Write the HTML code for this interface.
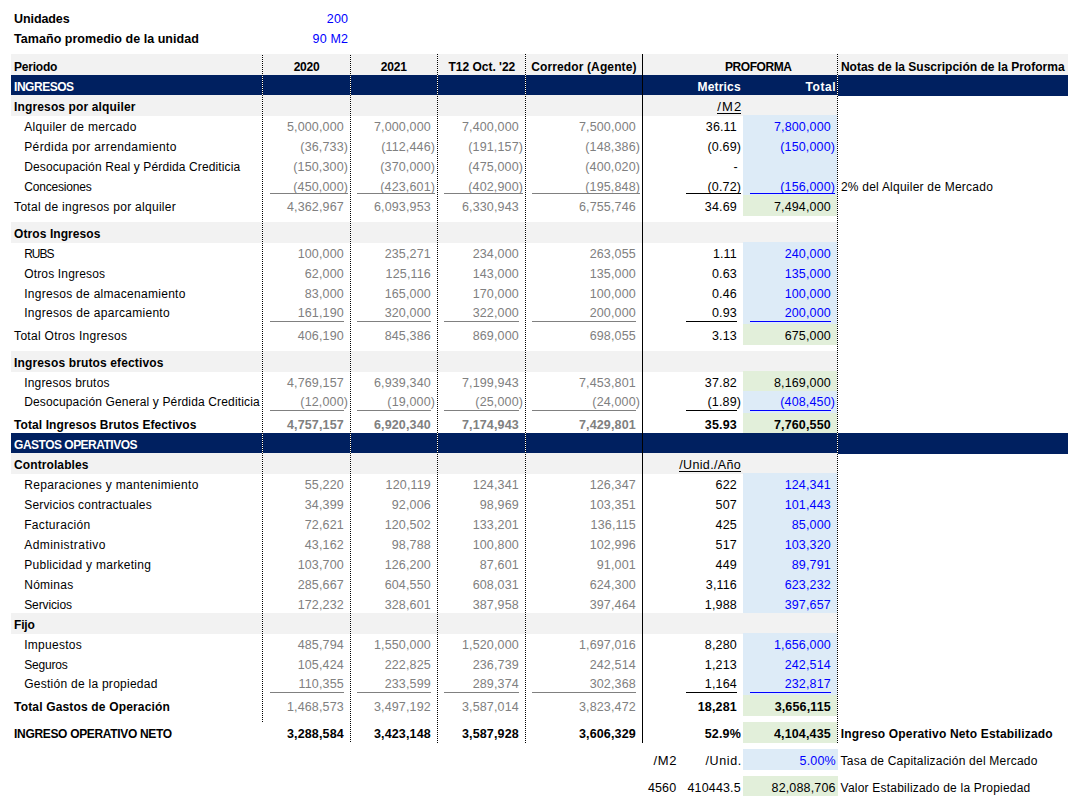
<!DOCTYPE html>
<html lang="es"><head><meta charset="utf-8"><title>Proforma</title><style>
html,body{margin:0;padding:0;background:#fff}
body{width:1068px;height:796px;position:relative;overflow:hidden;font-family:"Liberation Sans",sans-serif;font-size:12.0px;color:#000}
.r{position:absolute}
.t{position:absolute;white-space:nowrap;line-height:20px}
.b{font-weight:bold}
.u{text-decoration:underline;text-underline-offset:1.5px;text-decoration-thickness:1px}
.dv{position:absolute;width:1px;background:repeating-linear-gradient(to bottom,#000 0,#000 1px,#fff 1px,#fff 2px)}
</style></head><body>
<div class="r" style="left:11px;top:54px;width:1057px;height:21px;background:#f2f2f2"></div>
<div class="r" style="left:11px;top:75px;width:1057px;height:21px;background:#002060"></div>
<div class="r" style="left:11px;top:95px;width:827px;height:21px;background:#f2f2f2"></div>
<div class="r" style="left:11px;top:222px;width:827px;height:21px;background:#f2f2f2"></div>
<div class="r" style="left:11px;top:351px;width:827px;height:21px;background:#f2f2f2"></div>
<div class="r" style="left:743px;top:115px;width:95px;height:80px;background:#ddebf7"></div>
<div class="r" style="left:743px;top:195px;width:95px;height:21px;background:#e2efda"></div>
<div class="r" style="left:743px;top:242px;width:95px;height:82px;background:#ddebf7"></div>
<div class="r" style="left:743px;top:324px;width:95px;height:21px;background:#e2efda"></div>
<div class="r" style="left:743px;top:371px;width:95px;height:20px;background:#e2efda"></div>
<div class="r" style="left:743px;top:391px;width:95px;height:22px;background:#ddebf7"></div>
<div class="r" style="left:743px;top:413px;width:95px;height:20px;background:#e2efda"></div>
<div class="r" style="left:11px;top:433px;width:1057px;height:21px;background:#002060"></div>
<div class="r" style="left:11px;top:453px;width:827px;height:21px;background:#f2f2f2"></div>
<div class="r" style="left:11px;top:613px;width:827px;height:21px;background:#f2f2f2"></div>
<div class="r" style="left:743px;top:473px;width:95px;height:140px;background:#ddebf7"></div>
<div class="r" style="left:743px;top:613px;width:95px;height:20px;background:#f2f2f2"></div>
<div class="r" style="left:743px;top:633px;width:95px;height:62px;background:#ddebf7"></div>
<div class="r" style="left:743px;top:695px;width:95px;height:21px;background:#e2efda"></div>
<div class="r" style="left:743px;top:722px;width:95px;height:21px;background:#e2efda"></div>
<div class="r" style="left:743px;top:749px;width:95px;height:21px;background:#ddebf7"></div>
<div class="r" style="left:743px;top:776px;width:95px;height:21px;background:#e2efda"></div>
<div class="dv" style="left:262px;top:55px;height:667px"></div>
<div class="dv" style="left:350px;top:55px;height:688px"></div>
<div class="dv" style="left:437px;top:54px;height:689px"></div>
<div class="dv" style="left:525px;top:54px;height:689px"></div>
<div class="dv" style="left:837px;top:54px;height:689px"></div>
<div class="r" style="left:642px;top:54px;width:1px;height:689px;background:#000"></div>
<div class="r" style="left:717px;top:113px;width:24px;height:1px;background:#000"></div>
<div class="r" style="left:679px;top:471px;width:62px;height:1px;background:#000"></div>
<div class="r" style="left:270px;top:193px;width:78px;height:1px;background:#808080"></div>
<div class="r" style="left:357px;top:193px;width:78px;height:1px;background:#808080"></div>
<div class="r" style="left:444px;top:193px;width:79px;height:1px;background:#808080"></div>
<div class="r" style="left:532px;top:193px;width:108px;height:1px;background:#808080"></div>
<div class="r" style="left:686px;top:193px;width:55px;height:1px;background:#000"></div>
<div class="r" style="left:750px;top:193px;width:85px;height:1px;background:#0000ff"></div>
<div class="r" style="left:270px;top:321px;width:74px;height:1px;background:#808080"></div>
<div class="r" style="left:357px;top:321px;width:74px;height:1px;background:#808080"></div>
<div class="r" style="left:444px;top:321px;width:75px;height:1px;background:#808080"></div>
<div class="r" style="left:532px;top:321px;width:104px;height:1px;background:#808080"></div>
<div class="r" style="left:686px;top:321px;width:51px;height:1px;background:#000"></div>
<div class="r" style="left:750px;top:321px;width:81px;height:1px;background:#0000ff"></div>
<div class="r" style="left:270px;top:410px;width:74px;height:1px;background:#808080"></div>
<div class="r" style="left:357px;top:410px;width:74px;height:1px;background:#808080"></div>
<div class="r" style="left:444px;top:410px;width:75px;height:1px;background:#808080"></div>
<div class="r" style="left:532px;top:410px;width:104px;height:1px;background:#808080"></div>
<div class="r" style="left:686px;top:410px;width:51px;height:1px;background:#000"></div>
<div class="r" style="left:750px;top:410px;width:81px;height:1px;background:#0000ff"></div>
<div class="r" style="left:270px;top:692px;width:74px;height:1px;background:#808080"></div>
<div class="r" style="left:357px;top:692px;width:74px;height:1px;background:#808080"></div>
<div class="r" style="left:444px;top:692px;width:75px;height:1px;background:#808080"></div>
<div class="r" style="left:532px;top:692px;width:104px;height:1px;background:#808080"></div>
<div class="r" style="left:686px;top:692px;width:51px;height:1px;background:#000"></div>
<div class="r" style="left:750px;top:692px;width:81px;height:1px;background:#0000ff"></div>
<span class="t b" style="left:14.10px;top:9px;font-size:12.5px;letter-spacing:-0.101px">Unidades</span>
<span class="t" style="left:326.80px;top:9px;font-size:12.5px;color:#0000ff;letter-spacing:0.150px">200</span>
<span class="t b" style="left:14.10px;top:29px;font-size:12.5px;letter-spacing:0.034px">Tamaño promedio de la unidad</span>
<span class="t" style="left:312.61px;top:29px;font-size:12.5px;color:#0000ff;letter-spacing:0.150px">90 M2</span>
<span class="t b" style="left:14.10px;top:57px;letter-spacing:-0.240px">Periodo</span>
<span class="t b" style="left:293.70px;top:57px;letter-spacing:-0.274px">2020</span>
<span class="t b" style="left:380.80px;top:57px;letter-spacing:-0.207px">2021</span>
<span class="t b" style="left:448.40px;top:57px">T12 Oct. '22</span>
<span class="t b" style="left:531.20px;top:57px;letter-spacing:0.123px">Corredor (Agente)</span>
<span class="t b" style="left:725.00px;top:57px;letter-spacing:-0.433px">PROFORMA</span>
<span class="t b" style="left:840.90px;top:57px;letter-spacing:0.008px">Notas de la Suscripción de la Proforma</span>
<span class="t b" style="left:14.10px;top:77px;color:#fff;letter-spacing:-0.492px">INGRESOS</span>
<span class="t b" style="left:697.60px;top:77px;color:#fff;letter-spacing:0.159px">Metrics</span>
<span class="t b" style="left:805.60px;top:77px;color:#fff;letter-spacing:0.565px">Total</span>
<span class="t b" style="left:14.10px;top:435px;color:#fff;letter-spacing:-0.511px">GASTOS OPERATIVOS</span>
<span class="t b" style="left:14.10px;top:97px;letter-spacing:0.131px">Ingresos por alquiler</span>
<span class="t" style="left:717.30px;top:97px;font-size:13px;letter-spacing:1.130px">/M2</span>
<span class="t b" style="left:14.10px;top:224px;letter-spacing:0.075px">Otros Ingresos</span>
<span class="t b" style="left:14.10px;top:353px;letter-spacing:0.137px">Ingresos brutos efectivos</span>
<span class="t b" style="left:14.10px;top:455px;letter-spacing:0.089px">Controlables</span>
<span class="t" style="left:679.20px;top:455px;font-size:12.5px;letter-spacing:0.354px">/Unid./Año</span>
<span class="t b" style="left:14.10px;top:615px;letter-spacing:-0.199px">Fijo</span>
<span class="t" style="left:24.20px;top:117px;letter-spacing:0.306px">Alquiler de mercado</span>
<span class="t" style="left:286.94px;top:117px;font-size:12.5px;color:#808080;letter-spacing:0.150px">5,000,000</span>
<span class="t" style="left:373.94px;top:117px;font-size:12.5px;color:#808080;letter-spacing:0.150px">7,000,000</span>
<span class="t" style="left:461.94px;top:117px;font-size:12.5px;color:#808080;letter-spacing:0.150px">7,400,000</span>
<span class="t" style="left:578.94px;top:117px;font-size:12.5px;color:#808080;letter-spacing:0.150px">7,500,000</span>
<span class="t" style="left:705.80px;top:117px;font-size:12.5px;letter-spacing:0.150px">36.11</span>
<span class="t" style="left:773.94px;top:117px;font-size:12.5px;color:#0000ff;letter-spacing:0.150px">7,800,000</span>
<span class="t" style="left:24.20px;top:137px;letter-spacing:0.395px">Pérdida por arrendamiento</span>
<span class="t" style="left:300.35px;top:137px;font-size:12.5px;color:#808080;letter-spacing:0.150px">(36,733)</span>
<span class="t" style="left:381.18px;top:137px;font-size:12.5px;color:#808080;letter-spacing:0.150px">(112,446)</span>
<span class="t" style="left:468.25px;top:137px;font-size:12.5px;color:#808080;letter-spacing:0.150px">(191,157)</span>
<span class="t" style="left:585.25px;top:137px;font-size:12.5px;color:#808080;letter-spacing:0.150px">(148,386)</span>
<span class="t" style="left:707.56px;top:137px;font-size:12.5px;letter-spacing:0.150px">(0.69)</span>
<span class="t" style="left:780.25px;top:137px;font-size:12.5px;color:#0000ff;letter-spacing:0.150px">(150,000)</span>
<span class="t" style="left:24.20px;top:157px;letter-spacing:0.122px">Desocupación Real y Pérdida Crediticia</span>
<span class="t" style="left:293.25px;top:157px;font-size:12.5px;color:#808080;letter-spacing:0.150px">(150,300)</span>
<span class="t" style="left:380.25px;top:157px;font-size:12.5px;color:#808080;letter-spacing:0.150px">(370,000)</span>
<span class="t" style="left:468.25px;top:157px;font-size:12.5px;color:#808080;letter-spacing:0.150px">(475,000)</span>
<span class="t" style="left:585.25px;top:157px;font-size:12.5px;color:#808080;letter-spacing:0.150px">(400,020)</span>
<span class="t" style="left:733.40px;top:157px;font-size:12.5px">-</span>
<span class="t" style="left:24.20px;top:177px;letter-spacing:-0.183px">Concesiones</span>
<span class="t" style="left:293.25px;top:177px;font-size:12.5px;color:#808080;letter-spacing:0.150px">(450,000)</span>
<span class="t" style="left:380.25px;top:177px;font-size:12.5px;color:#808080;letter-spacing:0.150px">(423,601)</span>
<span class="t" style="left:468.25px;top:177px;font-size:12.5px;color:#808080;letter-spacing:0.150px">(402,900)</span>
<span class="t" style="left:585.25px;top:177px;font-size:12.5px;color:#808080;letter-spacing:0.150px">(195,848)</span>
<span class="t" style="left:707.56px;top:177px;font-size:12.5px;letter-spacing:0.150px">(0.72)</span>
<span class="t" style="left:780.25px;top:177px;font-size:12.5px;color:#0000ff;letter-spacing:0.150px">(156,000)</span>
<span class="t" style="left:14.10px;top:197px;letter-spacing:0.284px">Total de ingresos por alquiler</span>
<span class="t" style="left:286.94px;top:197px;font-size:12.5px;color:#808080;letter-spacing:0.150px">4,362,967</span>
<span class="t" style="left:373.94px;top:197px;font-size:12.5px;color:#808080;letter-spacing:0.150px">6,093,953</span>
<span class="t" style="left:461.94px;top:197px;font-size:12.5px;color:#808080;letter-spacing:0.150px">6,330,943</span>
<span class="t" style="left:578.94px;top:197px;font-size:12.5px;color:#808080;letter-spacing:0.150px">6,755,746</span>
<span class="t" style="left:704.87px;top:197px;font-size:12.5px;letter-spacing:0.150px">34.69</span>
<span class="t" style="left:773.94px;top:197px;font-size:12.5px;letter-spacing:0.150px">7,494,000</span>
<span class="t" style="left:24.20px;top:244px;letter-spacing:-1.012px">RUBS</span>
<span class="t" style="left:297.67px;top:244px;font-size:12.5px;color:#808080;letter-spacing:0.150px">100,000</span>
<span class="t" style="left:384.67px;top:244px;font-size:12.5px;color:#808080;letter-spacing:0.150px">235,271</span>
<span class="t" style="left:472.67px;top:244px;font-size:12.5px;color:#808080;letter-spacing:0.150px">234,000</span>
<span class="t" style="left:589.67px;top:244px;font-size:12.5px;color:#808080;letter-spacing:0.150px">263,055</span>
<span class="t" style="left:712.90px;top:244px;font-size:12.5px;letter-spacing:0.150px">1.11</span>
<span class="t" style="left:784.67px;top:244px;font-size:12.5px;color:#0000ff;letter-spacing:0.150px">240,000</span>
<span class="t" style="left:24.20px;top:264px;letter-spacing:0.162px">Otros Ingresos</span>
<span class="t" style="left:304.77px;top:264px;font-size:12.5px;color:#808080;letter-spacing:0.150px">62,000</span>
<span class="t" style="left:385.60px;top:264px;font-size:12.5px;color:#808080;letter-spacing:0.150px">125,116</span>
<span class="t" style="left:472.67px;top:264px;font-size:12.5px;color:#808080;letter-spacing:0.150px">143,000</span>
<span class="t" style="left:589.67px;top:264px;font-size:12.5px;color:#808080;letter-spacing:0.150px">135,000</span>
<span class="t" style="left:711.97px;top:264px;font-size:12.5px;letter-spacing:0.150px">0.63</span>
<span class="t" style="left:784.67px;top:264px;font-size:12.5px;color:#0000ff;letter-spacing:0.150px">135,000</span>
<span class="t" style="left:24.20px;top:284px;letter-spacing:0.285px">Ingresos de almacenamiento</span>
<span class="t" style="left:304.77px;top:284px;font-size:12.5px;color:#808080;letter-spacing:0.150px">83,000</span>
<span class="t" style="left:384.67px;top:284px;font-size:12.5px;color:#808080;letter-spacing:0.150px">165,000</span>
<span class="t" style="left:472.67px;top:284px;font-size:12.5px;color:#808080;letter-spacing:0.150px">170,000</span>
<span class="t" style="left:589.67px;top:284px;font-size:12.5px;color:#808080;letter-spacing:0.150px">100,000</span>
<span class="t" style="left:711.97px;top:284px;font-size:12.5px;letter-spacing:0.150px">0.46</span>
<span class="t" style="left:784.67px;top:284px;font-size:12.5px;color:#0000ff;letter-spacing:0.150px">100,000</span>
<span class="t" style="left:24.20px;top:303px;letter-spacing:0.292px">Ingresos de aparcamiento</span>
<span class="t" style="left:297.67px;top:303px;font-size:12.5px;color:#808080;letter-spacing:0.150px">161,190</span>
<span class="t" style="left:384.67px;top:303px;font-size:12.5px;color:#808080;letter-spacing:0.150px">320,000</span>
<span class="t" style="left:472.67px;top:303px;font-size:12.5px;color:#808080;letter-spacing:0.150px">322,000</span>
<span class="t" style="left:589.67px;top:303px;font-size:12.5px;color:#808080;letter-spacing:0.150px">200,000</span>
<span class="t" style="left:711.97px;top:303px;font-size:12.5px;letter-spacing:0.150px">0.93</span>
<span class="t" style="left:784.67px;top:303px;font-size:12.5px;color:#0000ff;letter-spacing:0.150px">200,000</span>
<span class="t" style="left:14.10px;top:326px;letter-spacing:0.291px">Total Otros Ingresos</span>
<span class="t" style="left:297.67px;top:326px;font-size:12.5px;color:#808080;letter-spacing:0.150px">406,190</span>
<span class="t" style="left:384.67px;top:326px;font-size:12.5px;color:#808080;letter-spacing:0.150px">845,386</span>
<span class="t" style="left:472.67px;top:326px;font-size:12.5px;color:#808080;letter-spacing:0.150px">869,000</span>
<span class="t" style="left:589.67px;top:326px;font-size:12.5px;color:#808080;letter-spacing:0.150px">698,055</span>
<span class="t" style="left:711.97px;top:326px;font-size:12.5px;letter-spacing:0.150px">3.13</span>
<span class="t" style="left:784.67px;top:326px;font-size:12.5px;letter-spacing:0.150px">675,000</span>
<span class="t" style="left:24.20px;top:373px;letter-spacing:0.185px">Ingresos brutos</span>
<span class="t" style="left:286.94px;top:373px;font-size:12.5px;color:#808080;letter-spacing:0.150px">4,769,157</span>
<span class="t" style="left:373.94px;top:373px;font-size:12.5px;color:#808080;letter-spacing:0.150px">6,939,340</span>
<span class="t" style="left:461.94px;top:373px;font-size:12.5px;color:#808080;letter-spacing:0.150px">7,199,943</span>
<span class="t" style="left:578.94px;top:373px;font-size:12.5px;color:#808080;letter-spacing:0.150px">7,453,801</span>
<span class="t" style="left:704.87px;top:373px;font-size:12.5px;letter-spacing:0.150px">37.82</span>
<span class="t" style="left:773.94px;top:373px;font-size:12.5px;letter-spacing:0.150px">8,169,000</span>
<span class="t" style="left:24.20px;top:392px;letter-spacing:0.151px">Desocupación General y Pérdida Crediticia</span>
<span class="t" style="left:300.35px;top:392px;font-size:12.5px;color:#808080;letter-spacing:0.150px">(12,000)</span>
<span class="t" style="left:387.35px;top:392px;font-size:12.5px;color:#808080;letter-spacing:0.150px">(19,000)</span>
<span class="t" style="left:475.35px;top:392px;font-size:12.5px;color:#808080;letter-spacing:0.150px">(25,000)</span>
<span class="t" style="left:592.35px;top:392px;font-size:12.5px;color:#808080;letter-spacing:0.150px">(24,000)</span>
<span class="t" style="left:707.56px;top:392px;font-size:12.5px;letter-spacing:0.150px">(1.89)</span>
<span class="t" style="left:780.25px;top:392px;font-size:12.5px;color:#0000ff;letter-spacing:0.150px">(408,450)</span>
<span class="t b" style="left:14.10px;top:415px;letter-spacing:0.084px">Total Ingresos Brutos Efectivos</span>
<span class="t b" style="left:286.94px;top:415px;font-size:12.5px;color:#808080;letter-spacing:0.150px">4,757,157</span>
<span class="t b" style="left:373.94px;top:415px;font-size:12.5px;color:#808080;letter-spacing:0.150px">6,920,340</span>
<span class="t b" style="left:461.94px;top:415px;font-size:12.5px;color:#808080;letter-spacing:0.150px">7,174,943</span>
<span class="t b" style="left:578.94px;top:415px;font-size:12.5px;color:#808080;letter-spacing:0.150px">7,429,801</span>
<span class="t b" style="left:704.87px;top:415px;font-size:12.5px;letter-spacing:0.150px">35.93</span>
<span class="t b" style="left:773.94px;top:415px;font-size:12.5px;letter-spacing:0.150px">7,760,550</span>
<span class="t" style="left:24.20px;top:475px;letter-spacing:0.326px">Reparaciones y mantenimiento</span>
<span class="t" style="left:304.77px;top:475px;font-size:12.5px;color:#808080;letter-spacing:0.150px">55,220</span>
<span class="t" style="left:385.60px;top:475px;font-size:12.5px;color:#808080;letter-spacing:0.150px">120,119</span>
<span class="t" style="left:472.67px;top:475px;font-size:12.5px;color:#808080;letter-spacing:0.150px">124,341</span>
<span class="t" style="left:589.67px;top:475px;font-size:12.5px;color:#808080;letter-spacing:0.150px">126,347</span>
<span class="t" style="left:715.60px;top:475px;font-size:12.5px;letter-spacing:0.150px">622</span>
<span class="t" style="left:784.67px;top:475px;font-size:12.5px;color:#0000ff;letter-spacing:0.150px">124,341</span>
<span class="t" style="left:24.20px;top:495px;letter-spacing:0.189px">Servicios contractuales</span>
<span class="t" style="left:304.77px;top:495px;font-size:12.5px;color:#808080;letter-spacing:0.150px">34,399</span>
<span class="t" style="left:391.77px;top:495px;font-size:12.5px;color:#808080;letter-spacing:0.150px">92,006</span>
<span class="t" style="left:479.77px;top:495px;font-size:12.5px;color:#808080;letter-spacing:0.150px">98,969</span>
<span class="t" style="left:589.67px;top:495px;font-size:12.5px;color:#808080;letter-spacing:0.150px">103,351</span>
<span class="t" style="left:715.60px;top:495px;font-size:12.5px;letter-spacing:0.150px">507</span>
<span class="t" style="left:784.67px;top:495px;font-size:12.5px;color:#0000ff;letter-spacing:0.150px">101,443</span>
<span class="t" style="left:24.20px;top:515px;letter-spacing:0.328px">Facturación</span>
<span class="t" style="left:304.77px;top:515px;font-size:12.5px;color:#808080;letter-spacing:0.150px">72,621</span>
<span class="t" style="left:384.67px;top:515px;font-size:12.5px;color:#808080;letter-spacing:0.150px">120,502</span>
<span class="t" style="left:472.67px;top:515px;font-size:12.5px;color:#808080;letter-spacing:0.150px">133,201</span>
<span class="t" style="left:590.60px;top:515px;font-size:12.5px;color:#808080;letter-spacing:0.150px">136,115</span>
<span class="t" style="left:715.60px;top:515px;font-size:12.5px;letter-spacing:0.150px">425</span>
<span class="t" style="left:791.77px;top:515px;font-size:12.5px;color:#0000ff;letter-spacing:0.150px">85,000</span>
<span class="t" style="left:24.20px;top:535px;letter-spacing:0.451px">Administrativo</span>
<span class="t" style="left:304.77px;top:535px;font-size:12.5px;color:#808080;letter-spacing:0.150px">43,162</span>
<span class="t" style="left:391.77px;top:535px;font-size:12.5px;color:#808080;letter-spacing:0.150px">98,788</span>
<span class="t" style="left:472.67px;top:535px;font-size:12.5px;color:#808080;letter-spacing:0.150px">100,800</span>
<span class="t" style="left:589.67px;top:535px;font-size:12.5px;color:#808080;letter-spacing:0.150px">102,996</span>
<span class="t" style="left:715.60px;top:535px;font-size:12.5px;letter-spacing:0.150px">517</span>
<span class="t" style="left:784.67px;top:535px;font-size:12.5px;color:#0000ff;letter-spacing:0.150px">103,320</span>
<span class="t" style="left:24.20px;top:555px;letter-spacing:0.286px">Publicidad y marketing</span>
<span class="t" style="left:297.67px;top:555px;font-size:12.5px;color:#808080;letter-spacing:0.150px">103,700</span>
<span class="t" style="left:384.67px;top:555px;font-size:12.5px;color:#808080;letter-spacing:0.150px">126,200</span>
<span class="t" style="left:479.77px;top:555px;font-size:12.5px;color:#808080;letter-spacing:0.150px">87,601</span>
<span class="t" style="left:596.77px;top:555px;font-size:12.5px;color:#808080;letter-spacing:0.150px">91,001</span>
<span class="t" style="left:715.60px;top:555px;font-size:12.5px;letter-spacing:0.150px">449</span>
<span class="t" style="left:791.77px;top:555px;font-size:12.5px;color:#0000ff;letter-spacing:0.150px">89,791</span>
<span class="t" style="left:24.20px;top:575px;letter-spacing:0.283px">Nóminas</span>
<span class="t" style="left:297.67px;top:575px;font-size:12.5px;color:#808080;letter-spacing:0.150px">285,667</span>
<span class="t" style="left:384.67px;top:575px;font-size:12.5px;color:#808080;letter-spacing:0.150px">604,550</span>
<span class="t" style="left:472.67px;top:575px;font-size:12.5px;color:#808080;letter-spacing:0.150px">608,031</span>
<span class="t" style="left:589.67px;top:575px;font-size:12.5px;color:#808080;letter-spacing:0.150px">624,300</span>
<span class="t" style="left:705.80px;top:575px;font-size:12.5px;letter-spacing:0.150px">3,116</span>
<span class="t" style="left:784.67px;top:575px;font-size:12.5px;color:#0000ff;letter-spacing:0.150px">623,232</span>
<span class="t" style="left:24.20px;top:595px;letter-spacing:-0.110px">Servicios</span>
<span class="t" style="left:297.67px;top:595px;font-size:12.5px;color:#808080;letter-spacing:0.150px">172,232</span>
<span class="t" style="left:384.67px;top:595px;font-size:12.5px;color:#808080;letter-spacing:0.150px">328,601</span>
<span class="t" style="left:472.67px;top:595px;font-size:12.5px;color:#808080;letter-spacing:0.150px">387,958</span>
<span class="t" style="left:589.67px;top:595px;font-size:12.5px;color:#808080;letter-spacing:0.150px">397,464</span>
<span class="t" style="left:704.87px;top:595px;font-size:12.5px;letter-spacing:0.150px">1,988</span>
<span class="t" style="left:784.67px;top:595px;font-size:12.5px;color:#0000ff;letter-spacing:0.150px">397,657</span>
<span class="t" style="left:24.20px;top:635px;letter-spacing:0.274px">Impuestos</span>
<span class="t" style="left:297.67px;top:635px;font-size:12.5px;color:#808080;letter-spacing:0.150px">485,794</span>
<span class="t" style="left:373.94px;top:635px;font-size:12.5px;color:#808080;letter-spacing:0.150px">1,550,000</span>
<span class="t" style="left:461.94px;top:635px;font-size:12.5px;color:#808080;letter-spacing:0.150px">1,520,000</span>
<span class="t" style="left:578.94px;top:635px;font-size:12.5px;color:#808080;letter-spacing:0.150px">1,697,016</span>
<span class="t" style="left:704.87px;top:635px;font-size:12.5px;letter-spacing:0.150px">8,280</span>
<span class="t" style="left:773.94px;top:635px;font-size:12.5px;color:#0000ff;letter-spacing:0.150px">1,656,000</span>
<span class="t" style="left:24.20px;top:655px;letter-spacing:-0.191px">Seguros</span>
<span class="t" style="left:297.67px;top:655px;font-size:12.5px;color:#808080;letter-spacing:0.150px">105,424</span>
<span class="t" style="left:384.67px;top:655px;font-size:12.5px;color:#808080;letter-spacing:0.150px">222,825</span>
<span class="t" style="left:472.67px;top:655px;font-size:12.5px;color:#808080;letter-spacing:0.150px">236,739</span>
<span class="t" style="left:589.67px;top:655px;font-size:12.5px;color:#808080;letter-spacing:0.150px">242,514</span>
<span class="t" style="left:704.87px;top:655px;font-size:12.5px;letter-spacing:0.150px">1,213</span>
<span class="t" style="left:784.67px;top:655px;font-size:12.5px;color:#0000ff;letter-spacing:0.150px">242,514</span>
<span class="t" style="left:24.20px;top:674px;letter-spacing:0.264px">Gestión de la propiedad</span>
<span class="t" style="left:298.60px;top:674px;font-size:12.5px;color:#808080;letter-spacing:0.150px">110,355</span>
<span class="t" style="left:384.67px;top:674px;font-size:12.5px;color:#808080;letter-spacing:0.150px">233,599</span>
<span class="t" style="left:472.67px;top:674px;font-size:12.5px;color:#808080;letter-spacing:0.150px">289,374</span>
<span class="t" style="left:589.67px;top:674px;font-size:12.5px;color:#808080;letter-spacing:0.150px">302,368</span>
<span class="t" style="left:704.87px;top:674px;font-size:12.5px;letter-spacing:0.150px">1,164</span>
<span class="t" style="left:784.67px;top:674px;font-size:12.5px;color:#0000ff;letter-spacing:0.150px">232,817</span>
<span class="t b" style="left:14.10px;top:697px;letter-spacing:0.163px">Total Gastos de Operación</span>
<span class="t" style="left:286.94px;top:697px;font-size:12.5px;color:#808080;letter-spacing:0.150px">1,468,573</span>
<span class="t" style="left:373.94px;top:697px;font-size:12.5px;color:#808080;letter-spacing:0.150px">3,497,192</span>
<span class="t" style="left:461.94px;top:697px;font-size:12.5px;color:#808080;letter-spacing:0.150px">3,587,014</span>
<span class="t" style="left:578.94px;top:697px;font-size:12.5px;color:#808080;letter-spacing:0.150px">3,823,472</span>
<span class="t b" style="left:697.77px;top:697px;font-size:12.5px;letter-spacing:0.150px">18,281</span>
<span class="t b" style="left:774.63px;top:697px;font-size:12.5px;letter-spacing:0.150px">3,656,115</span>
<span class="t b" style="left:14.10px;top:724px;letter-spacing:-0.330px">INGRESO OPERATIVO NETO</span>
<span class="t b" style="left:286.94px;top:724px;font-size:12.5px;color:#000;letter-spacing:0.150px">3,288,584</span>
<span class="t b" style="left:373.94px;top:724px;font-size:12.5px;color:#000;letter-spacing:0.150px">3,423,148</span>
<span class="t b" style="left:461.94px;top:724px;font-size:12.5px;color:#000;letter-spacing:0.150px">3,587,928</span>
<span class="t b" style="left:578.94px;top:724px;font-size:12.5px;color:#000;letter-spacing:0.150px">3,606,329</span>
<span class="t b" style="left:704.77px;top:724px;font-size:12.5px;letter-spacing:0.150px">52.9%</span>
<span class="t b" style="left:773.94px;top:724px;font-size:12.5px;letter-spacing:0.150px">4,104,435</span>
<span class="t" style="left:840.90px;top:177px;letter-spacing:0.233px">2% del Alquiler de Mercado</span>
<span class="t b" style="left:840.80px;top:724px;letter-spacing:0.170px">Ingreso Operativo Neto Estabilizado</span>
<span class="t" style="left:653.60px;top:751px;font-size:13px;letter-spacing:0.580px">/M2</span>
<span class="t" style="left:705.50px;top:751px;font-size:12.5px;letter-spacing:0.604px">/Unid.</span>
<span class="t" style="left:799.57px;top:751px;font-size:12.5px;color:#0000ff;letter-spacing:0.150px">5.00%</span>
<span class="t" style="left:840.60px;top:751px;letter-spacing:0.222px">Tasa de Capitalización del Mercado</span>
<span class="t" style="left:647.89px;top:778px;font-size:12.5px;letter-spacing:0.150px">4560</span>
<span class="t" style="left:687.47px;top:778px;font-size:12.5px;letter-spacing:0.150px">410443.5</span>
<span class="t" style="left:771.54px;top:778px;font-size:12.5px;letter-spacing:0.150px">82,088,706</span>
<span class="t" style="left:840.60px;top:778px;letter-spacing:0.216px">Valor Estabilizado de la Propiedad</span>
</body></html>
